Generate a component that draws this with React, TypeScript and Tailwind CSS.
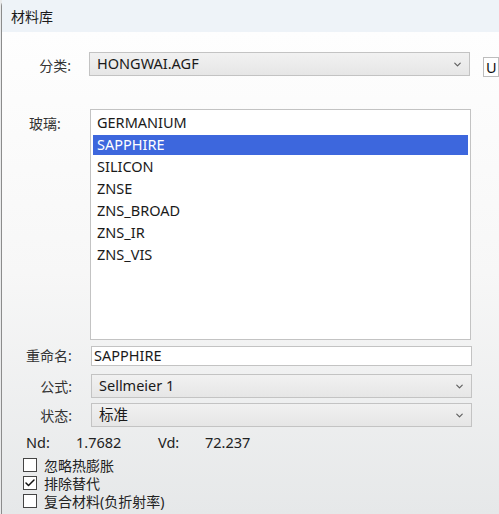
import { Check, ChevronDown } from "lucide-react";

const font = { fontFamily: '"Noto Sans", "Noto Sans CJK SC", sans-serif' };

const glasses = ["GERMANIUM", "SAPPHIRE", "SILICON", "ZNSE", "ZNS_BROAD", "ZNS_IR", "ZNS_VIS"];

function Select({ value, className = "" }: { value: string; className?: string }) {
  return (
    <div
      className={`flex h-[24px] w-[381px] items-center justify-between border border-[#c3c3c3] bg-linear-to-b from-[#f1f1f1] to-[#e6e6e6] pl-[7px] pr-[6px] text-[14.5px] text-[#1a1a1a] ${className}`}
    >
      <span>{value}</span>
      <ChevronDown size={11} strokeWidth={2.6} className="text-[#606060]" />
    </div>
  );
}

function CheckRow({ label, checked }: { label: string; checked?: boolean }) {
  return (
    <div className="flex h-[18px] items-center">
      <div className="ml-[21px] flex h-[14px] w-[14px] items-center justify-center border border-[#444] bg-white">
        {checked && <Check size={12} strokeWidth={3} className="text-[#111]" />}
      </div>
      <span className="ml-[7px] text-[14px] text-[#222]">{label}</span>
    </div>
  );
}

export default function App() {
  return (
    <div className="h-[514px] w-[499px] overflow-hidden bg-[#e9eaeb]" style={font}>
      <div className="ml-[1px] flex h-full flex-col rounded-tl-[6px] border-l border-[#8c8c8c]">
        {/* Title bar */}
        <div className="flex h-[32px] items-center bg-[#eef3f8] pl-[9px] text-[14px] text-[#1b1b1b]">
          材料库
        </div>

        <div className="flex flex-1 flex-col bg-linear-to-b from-[#fefefe] via-[#f7f7f7] to-[#e6e8e9]">
          {/* 分类 */}
          <div className="mt-[20px] flex items-start">
            <span className="mt-[3px] w-[69px] text-right text-[14px] text-[#333]">分类:</span>
            <Select value="HONGWAI.AGF" className="ml-[18px]" />
            <div className="ml-[13px] mt-[5px] h-[20px] flex-1 overflow-hidden border border-[#bdbdbd] bg-white pl-[2px] text-[14.5px] leading-[18px] text-[#111]">
              U
            </div>
          </div>

          {/* 玻璃 */}
          <div className="mt-[32px] flex items-start">
            <span className="ml-[27px] mt-[4px] w-[60px] text-[14px] text-[#333]">玻璃:</span>
            <div className="ml-[1px] flex h-[231px] w-[381px] flex-col gap-[2px] border border-[#c3c3c3] bg-white px-[2px] pt-[3px]">
              {glasses.map((g) => (
                <div
                  key={g}
                  className={`flex h-[20px] shrink-0 items-center pl-[4px] text-[14.5px] ${
                    g === "SAPPHIRE" ? "bg-[#3d67dd] text-white" : "text-[#1a1a1a]"
                  }`}
                >
                  {g}
                </div>
              ))}
            </div>
          </div>

          {/* 重命名 */}
          <div className="mt-[5px] flex items-center">
            <span className="ml-[24px] w-[64px] text-[14px] text-[#333]">重命名:</span>
            <div className="ml-[1px] flex h-[20px] w-[381px] items-center border border-[#c3c3c3] bg-white pl-[2px] text-[14.5px] text-[#1a1a1a]">
              SAPPHIRE
            </div>
          </div>

          {/* 公式 */}
          <div className="mt-[8px] flex items-center">
            <span className="w-[70px] text-right text-[14px] text-[#333]">公式:</span>
            <Select value="Sellmeier 1" className="ml-[19px]" />
          </div>

          {/* 状态 */}
          <div className="mt-[5px] flex items-center">
            <span className="w-[70px] text-right text-[14px] text-[#333]">状态:</span>
            <Select value="标准" className="ml-[19px]" />
          </div>

          {/* Nd / Vd */}
          <div className="mt-[6px] flex h-[20px] items-center text-[14.5px] text-[#222]">
            <span className="ml-[24px] w-[50px]">Nd:</span>
            <span className="w-[82px]">1.7682</span>
            <span className="w-[47px]">Vd:</span>
            <span>72.237</span>
          </div>

          <div className="mt-[3px] flex flex-col">
            <CheckRow label="忽略热膨胀" />
            <CheckRow label="排除替代" checked />
            <CheckRow label="复合材料(负折射率)" />
          </div>
        </div>
      </div>
    </div>
  );
}
